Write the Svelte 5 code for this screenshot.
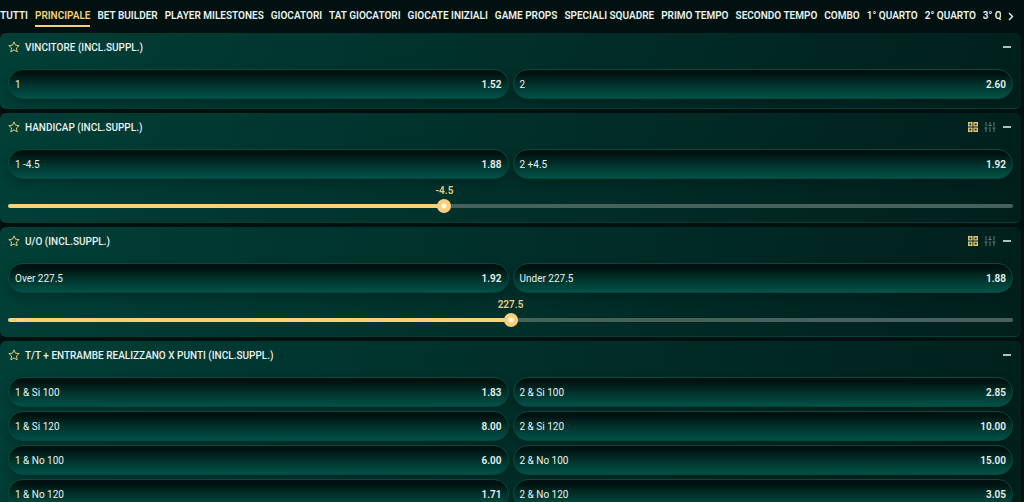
<script lang="ts">
    type Market = {
        title: string;
        odds: [string, string][];
        line?: { value: number; min: number; max: number };
    };

    const tabs = [
        "Tutti", "Principale", "Bet Builder", "Player Milestones", "Giocatori", "TAT Giocatori",
        "Giocate Iniziali", "Game Props", "Speciali Squadre", "Primo Tempo", "Secondo Tempo",
        "Combo", "1° Quarto", "2° Quarto", "3° Quarto",
    ];
    let active = $state("Principale");
    let tabList: HTMLElement;

    let markets = $state<Market[]>([
        { title: "Vincitore (incl.suppl.)", odds: [["1", "1.52"], ["2", "2.60"]] },
        {
            title: "Handicap (incl.suppl.)",
            odds: [["1 -4.5", "1.88"], ["2 +4.5", "1.92"]],
            line: { value: -4.5, min: -17.5, max: 12.5 },
        },
        {
            title: "U/O (incl.suppl.)",
            odds: [["Over 227.5", "1.92"], ["Under 227.5", "1.88"]],
            line: { value: 227.5, min: 212.5, max: 242.5 },
        },
        {
            title: "T/T + entrambe realizzano X punti (incl.suppl.)",
            odds: [
                ["1 & Si 100", "1.83"], ["2 & Si 100", "2.85"],
                ["1 & Si 120", "8.00"], ["2 & Si 120", "10.00"],
                ["1 & No 100", "6.00"], ["2 & No 100", "15.00"],
                ["1 & No 120", "1.71"], ["2 & No 120", "3.05"],
            ],
        },
    ]);
    let closed = $state<Record<string, boolean>>({});

    function percent(line: { value: number; min: number; max: number }) {
        return (line.value - line.min) / (line.max - line.min);
    }
</script>

<nav>
    <div class="tabs" bind:this={tabList}>
        {#each tabs as tab}
            <button class="tab" class:active={tab === active} onclick={() => (active = tab)}>{tab}</button>
        {/each}
    </div>
    <button class="next" aria-label="Avanti" onclick={() => tabList.scrollBy({ left: 200, behavior: "smooth" })}>
        <svg width="6" height="10" viewBox="0 0 6 10"><path d="M1 2 4.5 5.5 1 9" /></svg>
    </button>
</nav>

<main>
    {#each markets as market}
        <section>
            <header>
                <button class="icon gold" aria-label="Preferito">
                    <svg width="12" height="12" viewBox="0 0 12 12">
                        <path d="M6 .9 7.5 4.2 11.2 4.6 8.4 7 9.2 10.8 6 8.9 2.8 10.8 3.6 7 .8 4.6 4.5 4.2Z" />
                    </svg>
                </button>
                <h2>{market.title}</h2>
                {#if market.line}
                    <button class="icon gold grid-view" aria-label="Griglia">
                        <svg width="10" height="10" viewBox="0 0 10 10">
                            <path d="M.7.7h3.2v3.2H.7ZM6.1.7h3.2v3.2H6.1ZM.7 6.1h3.2v3.2H.7ZM6.1 6.1h3.2v3.2H6.1Z" />
                        </svg>
                    </button>
                    <button class="icon muted" aria-label="Cursore">
                        <svg width="12" height="10" viewBox="0 0 12 10">
                            <path d="M2 0v4.5M2 6v4M6 0v3M6 5v5M10 0v4.5M10 6v4M.5 6h3M4.3 3.5h3.4M8.5 6h3" />
                        </svg>
                    </button>
                {/if}
                <button
                    class="icon toggle"
                    aria-label="Chiudi"
                    onclick={() => (closed[market.title] = !closed[market.title])}
                >
                    <svg width="8" height="10" viewBox="0 0 8 10"><path d="M0 5h8" /></svg>
                </button>
            </header>
            {#if !closed[market.title]}
                <div class="odds">
                    {#each market.odds as [name, price]}
                        <button class="odd"><span>{name}</span><b>{price}</b></button>
                    {/each}
                </div>
                {#if market.line}
                    <div class="line" style="--p: {percent(market.line)}">
                        <output>{market.line.value}</output>
                        <input
                            type="range"
                            aria-label={market.title}
                            min={market.line.min}
                            max={market.line.max}
                            step="1"
                            bind:value={market.line.value}
                        />
                    </div>
                {/if}
            {/if}
        </section>
    {/each}
</main>

<style>
    :global(body) {
        background: #00110f;
        color: #e9f3f0;
        font-family: Roboto, "Liberation Sans", sans-serif;
        font-size: 10px;
        overflow: hidden;
    }
    button {
        background: none;
        border: 0;
        padding: 0;
        color: inherit;
        font: inherit;
        cursor: pointer;
    }
    svg {
        display: block;
        fill: none;
        stroke: currentColor;
    }
    nav {
        display: flex;
        height: 33px;
        padding-right: 10px;
    }
    .tabs {
        flex: 1;
        min-width: 0;
        display: flex;
        align-items: flex-start;
        gap: 7px;
        overflow: hidden;
    }
    .tab {
        flex: none;
        height: 27px;
        padding-top: 5px;
        border-bottom: 2px solid transparent;
        font-weight: 600;
        text-transform: uppercase;
        white-space: nowrap;
    }
    .tab.active {
        color: #f5cf7c;
        border-color: #f5cf7c;
    }
    .next {
        height: 32px;
        padding-left: 7px;
    }
    .next svg {
        stroke-width: 1.4;
    }
    main {
        display: flex;
        flex-direction: column;
        gap: 4px;
        padding-right: 3px;
    }
    section {
        box-sizing: border-box;
        padding: 0 8px 9px;
        border-bottom: 1px solid #063d35;
        border-radius: 6px;
        background: linear-gradient(100deg, #013f37, #012f2a 50%, #01201c);
    }
    header {
        display: flex;
        align-items: center;
        height: 28px;
        margin-bottom: 8px;
    }
    h2 {
        flex: 1;
        margin: 0 0 0 5px;
        font-size: 10px;
        font-weight: 500;
        text-transform: uppercase;
    }
    .gold {
        color: #e3c873;
    }
    .muted {
        color: #5d7f78;
        margin-left: 6px;
    }
    .toggle {
        margin: 0 2px 0 7px;
    }
    .toggle svg {
        stroke-width: 2;
        color: #a9c4bd;
    }
    .grid-view svg {
        stroke-width: 1.4;
    }
    .odds {
        display: grid;
        grid-template-columns: 1fr 1fr;
        gap: 4px;
    }
    .odd {
        display: flex;
        align-items: center;
        justify-content: space-between;
        height: 30px;
        padding: 0 6px;
        border: 1px solid #09483e;
        border-radius: 15px;
        background: linear-gradient(#00110f 10%, #013029 50%, #014f45 95%);
        box-shadow: 0 4px 10px rgba(0, 20, 17, 0.3);
    }
    .odd b {
        font-weight: 600;
    }
    .line {
        position: relative;
        padding: 20px 0 1px;
    }
    output {
        position: absolute;
        top: 6px;
        left: calc(7px + (100% - 14px) * var(--p));
        transform: translateX(-50%);
        color: #e6ca80;
        font-weight: 600;
    }
    input {
        display: block;
        appearance: none;
        width: 100%;
        height: 13px;
        margin: 0;
        background: none;
        cursor: pointer;
    }
    input::-webkit-slider-runnable-track {
        height: 4px;
        border-radius: 2px;
        background: linear-gradient(90deg, #f8d277 calc(7px + (100% - 14px) * var(--p)), #47615c 0);
    }
    input::-webkit-slider-thumb {
        appearance: none;
        width: 14px;
        height: 14px;
        margin-top: -5px;
        border-radius: 50%;
        background: radial-gradient(circle, #fffbe8 2px, #fbd07a 3px);
    }
</style>
